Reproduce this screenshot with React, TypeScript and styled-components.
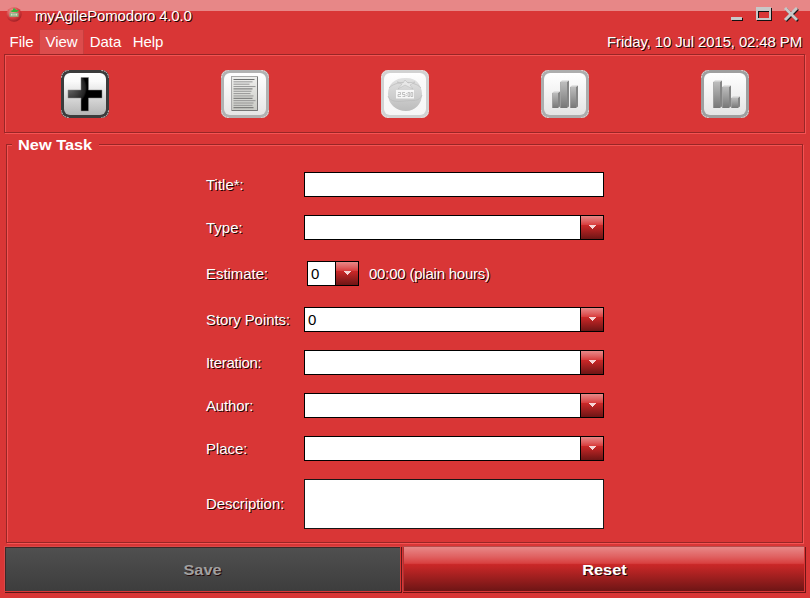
import React from 'react';
import styled, { createGlobalStyle } from 'styled-components';

const RED = '#d93636';
const DARK = '#982626';
const LIGHT = '#f55353';
const GLOSS =
  'linear-gradient(180deg, #e88888 0%, #e06161 22%, #d94040 37%, #c92727 40%, #c22626 46%, #6e1515 100%)';

const GlobalStyle = createGlobalStyle`
  *, *::before, *::after { box-sizing: border-box; }
  html, body { margin: 0; padding: 0; background: ${RED}; overflow: hidden; }
  button, input, textarea { font: inherit; }
`;

const Window = styled.div`
  display: flex;
  flex-direction: column;
  width: 810px;
  height: 598px;
  background: ${RED};
  color: #fff;
  font: 15px/17px "Liberation Sans", Arial, sans-serif;
  white-space: nowrap;
`;

const ShadowText = styled.span<{ $spacing?: number }>`
  letter-spacing: ${(p) => p.$spacing ?? 0}px;
  text-shadow: 1px 1px 0 #200404;
`;

const TitleBar = styled.header`
  display: flex;
  height: 29px;
  padding: 7px 10px 0 6px;
  background: linear-gradient(180deg, #e78787 11px, ${RED} 11px);
`;

const AppTitle = styled(ShadowText)`
  margin: 0 auto 0 13px;
`;

const WindowControls = styled.div`
  display: flex;
  svg { display: block; }
`;

const MenuBar = styled.nav`
  display: flex;
  height: 25px;
  padding: 0 8px 0 4px;
  align-items: stretch;
`;

const MenuItem = styled.div<{ $width: number; $active?: boolean }>`
  display: flex;
  align-items: flex-start;
  justify-content: center;
  width: ${(p) => p.$width}px;
  padding-top: 3px;
  letter-spacing: -0.1px;
  background: ${(p) => (p.$active ? '#dc4c4c' : 'transparent')};
  border: 1px solid ${(p) => (p.$active ? '#c83e3e' : 'transparent')};
  border-bottom: 0;
`;

const Clock = styled(ShadowText)`
  margin: 4px 0 0 auto;
`;

const etched = `
  border: 1px solid ${DARK};
  box-shadow: 1px 1px 0 ${LIGHT}, inset 1px 1px 0 ${LIGHT};
`;

const Toolbar = styled.div`
  ${etched}
  display: grid;
  grid-template-columns: repeat(5, 160px);
  place-items: center;
  height: 79px;
  width: 801px;
  margin-left: 4px;
  svg { display: block; }
`;

const TaskGroup = styled.fieldset`
  position: relative;
  width: 797px;
  height: 399px;
  margin: 11px 0 0 6px;
  padding: 27px 0 0 199px;
  ${etched}
`;

const GroupTitle = styled.div`
  position: absolute;
  left: 5px;
  top: -9px;
  width: 87px;
  padding-left: 6px;
  background: ${RED};
  font-weight: bold;
`;

const WideText = styled.span`
  display: inline-block;
  transform: scaleX(1.09);
  transform-origin: left;
`;

const ButtonText = styled(WideText)`
  transform-origin: center;
`;

const Row = styled.div<{ $height?: number; $gap?: number }>`
  display: grid;
  grid-template-columns: 98px 300px;
  align-items: center;
  height: ${(p) => p.$height ?? 25}px;
  margin-bottom: ${(p) => p.$gap ?? 18}px;
`;

const FieldLabel = styled(ShadowText)<{ $raised?: boolean }>`
  padding-bottom: ${(p) => (p.$raised ? 2 : 0)}px;
`;

const TextField = styled.input`
  display: block;
  width: 300px;
  height: 25px;
  padding: 0 4px;
  border: 1px solid #000;
  border-radius: 0;
  background: #fff;
`;

const TextArea = styled.textarea`
  display: block;
  width: 300px;
  height: 50px;
  padding: 3px;
  border: 1px solid #161616;
  border-radius: 0;
  background: #fff;
  resize: none;
`;

const Combo = styled.div<{ $width: number }>`
  display: flex;
  width: ${(p) => p.$width}px;
  height: 25px;
  border: 1px solid #000;
  background: #fff;
  color: #000;
`;

const ComboValue = styled.span`
  flex: 1;
  padding: 3px 0 0 3px;
`;

const ComboButton = styled.span`
  display: flex;
  width: 23px;
  padding: 9px 0 0 8px;
  border-left: 1px solid #000;
  background: ${GLOSS};
`;

const EstimateField = styled.div`
  display: flex;
  align-items: center;
  gap: 10px;
  padding-left: 3px;
`;

const ButtonBar = styled.footer`
  display: grid;
  grid-template-columns: 397px 404px;
  height: 47px;
  margin: 3px 0 0 4px;
`;

const ActionButton = styled.button<{ $primary?: boolean }>`
  padding: 0 0 0 1px;
  color: ${(p) => (p.$primary ? '#fff' : '#a0a0a0')};
  font-weight: bold;
  text-shadow: 1px 1px 0 #220808;
  border: 1px solid;
  border-color: ${(p) => (p.$primary ? '#b84c4c #d93636 #d93636 #d93636' : '#d94848 #d93636 #d93636 #d94848')};
  border-radius: 0;
  background: ${(p) => (p.$primary ? GLOSS : 'linear-gradient(180deg, #505050, #3d3d3d)')};
  background-clip: padding-box;
  box-shadow: ${(p) =>
    p.$primary
      ? 'inset 1px 0 0 #b03434, 1px 1px 0 #6e1515'
      : 'inset 1px 1px 0 #3b2828, 1px 1px 0 #5a1818'};
  width: ${(p) => (p.$primary ? 403 : 397)}px;
  height: 46px;
  margin-left: ${(p) => (p.$primary ? 1 : 0)}px;
`;

const TomatoLogo = () => (
  <svg width="16" height="16" viewBox="0 0 16 16">
    <defs>
      <radialGradient id="tomato" cx="40%" cy="30%" r="75%">
        <stop offset="0" stopColor="#f0a8a0" />
        <stop offset=".6" stopColor="#d43a3d" />
        <stop offset="1" stopColor="#981c22" />
      </radialGradient>
    </defs>
    <ellipse cx="8" cy="7.500" rx="7.600" ry="7.300" fill="url(#tomato)" />
    <path d="M4 4l3-1 0-1.500 2 0 1 1.500 3 0-2 2H6z" fill="#2fb53c" />
    <rect x="3.500" y="5.800" width="9" height="4" fill="#8fb487" />
    <path d="M5 6.800h1.500v1.800H5zm2.500 0h1v1.800h-1zm2 0h1.500v1.800H9.500z" fill="#d7dfc5" />
  </svg>
);

const Chevron = () => (
  <svg width="7" height="4" viewBox="0 0 7 4" shapeRendering="crispEdges">
    <path d="M0 0h7v1H0zM1 1h5v1H1zM2 2h3v1H2zM3 3h1v1H3z" fill="#f7d5d5" />
  </svg>
);

const ToolIcon = ({ id, edge, children, low }: { id: string; edge: string; low: string; children: React.ReactNode }) => (
  <svg width="48" height="48" viewBox="0 0 48 48">
    <defs>
      <linearGradient id={`${id}-face`} x1="0" y1="0" x2="0" y2="1">
        <stop offset="0" stopColor="#fff" />
        <stop offset=".2" stopColor="#fafafa" />
        <stop offset="1" stopColor={low} />
      </linearGradient>
      <linearGradient id={`${id}-bar`} x1="0" y1="0" x2="0" y2="1">
        <stop offset="0" stopColor="#bdbdbd" />
        <stop offset="1" stopColor="#777" />
      </linearGradient>
    </defs>
    <rect width="48" height="48" rx="7" fill={edge} />
    <path
      d="M.5 7.500Q1 1 7.500.5M40.500.5Q47 1 47.500 7.500M47.500 40.500Q47 47 40.500 47.500M7.500 47.500Q1 47 .5 40.500"
      fill="none"
      stroke="#f3e4e4"
      strokeDasharray="1.500 1"
    />
    <rect x="3" y="3" width="42" height="42" rx="6" fill={`url(#${id}-face)`} />
    {children}
  </svg>
);

const AddIcon = () => (
  <ToolIcon id="add" edge="#3c3c3c" low="#b5b5b5">
    <defs>
      <radialGradient id="plus" cx="8" cy="18" r="18" gradientUnits="userSpaceOnUse">
        <stop offset="0" stopColor="#6a6a6a" />
        <stop offset=".9" stopColor="#222" />
        <stop offset="1" stopColor="#000" />
      </radialGradient>
    </defs>
    <path d="M20 7.500h7.500V20H41v8H27.500v13H20V28H7V20h13z" fill="url(#plus)" stroke="#888" strokeWidth=".5" />
  </ToolIcon>
);

const lines = [21, 19, 16, 22, 19, 18, 17, 20, 19, 22, 20, 19, 20];

const ListIcon = () => (
  <ToolIcon id="list" edge="#b2b2b2" low="#e6e6e6">
    <defs>
      <linearGradient id="paper" x1="0" y1="0" x2="0" y2="1">
        <stop offset="0" stopColor="#efefed" />
        <stop offset="1" stopColor="#c9cac5" />
      </linearGradient>
    </defs>
    <rect x="10.500" y="6.500" width="26" height="34" fill="url(#paper)" stroke="#aaa" />
    <path d="M36.500 7v33.500H11" fill="none" stroke="#777" />
    {lines.map((w, i) => (
      <path key={i} d={`M12.500 ${9.5 + i * 2.35}h${w}`} stroke={i % 4 ? '#8d8d8d' : '#626262'} strokeWidth=".9" />
    ))}
  </ToolIcon>
);

const TimerIcon = () => (
  <ToolIcon id="timer" edge="#d2d2d2" low="#f6f6f6">
    <defs>
      <linearGradient id="timer-body" x1="0" y1="0" x2="0" y2="1">
        <stop offset="0" stopColor="#e2e2e2" />
        <stop offset=".5" stopColor="#d0d0d0" />
        <stop offset="1" stopColor="#bcbcbc" />
      </linearGradient>
    </defs>
    <path d="M24 8C34 7 41 14 41 24C41 34 34 41 25 41C15 41 7 34 7 24C7 14 14 8 24 8z" fill="url(#timer-body)" />
    <path d="M7 26C9 32 17 32 24 31S39 32 41 25M8 18C14 11 33 10 40 18" fill="none" stroke="#bababa" strokeWidth=".7" />
    <path d="M16 12l6 1 2-3 3 3 7-1-5 3 3 4-8-4-7 4 4-5z" fill="#e8e8e8" stroke="#b7b7b7" strokeWidth=".5" />
    <rect x="15" y="20" width="18" height="8.500" fill="#f7f7f7" />
    <path d="M17 22.500h2.500v2h-2.500v2h3M24 22.500h-2.500v2H24v2h-2.500M25.500 23v.8m0 1.500v.8M27 22.500h1.700v4H27zM30 22.500h1.700v4H30z" fill="none" stroke="#aaa" strokeWidth=".7" />
  </ToolIcon>
);

type Bar = [x: number, y: number, width: number];

const ChartIcon = ({ id, bars, bottom, edge }: { id: string; bars: Bar[]; bottom: number; edge: string }) => (
  <ToolIcon id={id} edge={edge} low="#e4e4e4">
    {bars.map(([x, y, w]) => (
      <g key={x}>
        <path d={`M${x} ${y}h${w - 2}v${bottom - y}h${2 - w}z`} fill={`url(#${id}-bar)`} />
        <path d={`M${x} ${y}l2-1.500h${w - 2}l-2 1.500z`} fill="#d0d0d0" />
        <path d={`M${x + w - 2} ${y}l2-1.500v${bottom - y}l-2 1.500z`} fill="#858585" />
        <path d={`M${x + .5} ${y}v${bottom - y}`} stroke="#aaa" strokeWidth=".6" />
      </g>
    ))}
  </ToolIcon>
);

const ComboBox = ({ value = '', width = 300 }: { value?: string; width?: number }) => (
  <Combo $width={width}>
    <ComboValue>{value}</ComboValue>
    <ComboButton><Chevron /></ComboButton>
  </Combo>
);

export default function App() {
  return (
    <>
      <GlobalStyle />
      <Window>
        <TitleBar>
          <TomatoLogo />
          <AppTitle $spacing={-0.16}>myAgilePomodoro 4.0.0</AppTitle>
          <WindowControls>
            <svg width="70" height="16" viewBox="0 0 70 16">
              <path d="M2 11h11v3H2z" fill="#111" />
              <path d="M1 10h11v3H1z" fill="#c8c8c8" />
              <path d="M27 1h15v13H27zM29 5v6h11V5z" fill="#111" fillRule="evenodd" />
              <path d="M26 0h15v13H26zM28 4v7h11V4z" fill="#c8c8c8" fillRule="evenodd" />
              <path d="M56 2l12 12M68 2L56 14" stroke="#161616" strokeWidth="2.500" />
              <path d="M55 1l12 12M67 1L55 13" stroke="#c8c8c8" strokeWidth="2.900" />
            </svg>
          </WindowControls>
        </TitleBar>

        <MenuBar>
          <MenuItem $width={35}>File</MenuItem>
          <MenuItem $width={45} $active>View</MenuItem>
          <MenuItem $width={43}>Data</MenuItem>
          <MenuItem $width={42}>Help</MenuItem>
          <Clock $spacing={-0.14}>Friday, 10 Jul 2015, 02:48 PM</Clock>
        </MenuBar>

        <Toolbar>
          <AddIcon />
          <ListIcon />
          <TimerIcon />
          <ChartIcon id="report" edge="#adadad" bottom={38} bars={[[11, 23, 8], [19, 12, 9], [29, 17, 8]]} />
          <ChartIcon id="burndown" edge="#9f9f9f" bottom={38} bars={[[12, 12, 9], [21, 17, 9], [30, 28, 9]]} />
        </Toolbar>

        <TaskGroup>
          <GroupTitle><WideText>New Task</WideText></GroupTitle>
          <Row>
            <FieldLabel>Title*:</FieldLabel>
            <TextField />
          </Row>
          <Row $gap={21}>
            <FieldLabel>Type:</FieldLabel>
            <ComboBox />
          </Row>
          <Row $gap={21}>
            <FieldLabel $spacing={-0.05}>Estimate:</FieldLabel>
            <EstimateField>
              <ComboBox value="0" width={52} />
              <ShadowText $spacing={-0.22}>00:00 (plain hours)</ShadowText>
            </EstimateField>
          </Row>
          <Row>
            <FieldLabel $spacing={-0.08}>Story Points:</FieldLabel>
            <ComboBox value="0" />
          </Row>
          <Row>
            <FieldLabel $spacing={-0.3}>Iteration:</FieldLabel>
            <ComboBox />
          </Row>
          <Row>
            <FieldLabel $spacing={-0.15}>Author:</FieldLabel>
            <ComboBox />
          </Row>
          <Row>
            <FieldLabel $spacing={-0.05}>Place:</FieldLabel>
            <ComboBox />
          </Row>
          <Row $height={50}>
            <FieldLabel $raised $spacing={-0.08}>Description:</FieldLabel>
            <TextArea />
          </Row>
        </TaskGroup>

        <ButtonBar>
          <ActionButton disabled><ButtonText>Save</ButtonText></ActionButton>
          <ActionButton $primary><ButtonText>Reset</ButtonText></ActionButton>
        </ButtonBar>
      </Window>
    </>
  );
}
